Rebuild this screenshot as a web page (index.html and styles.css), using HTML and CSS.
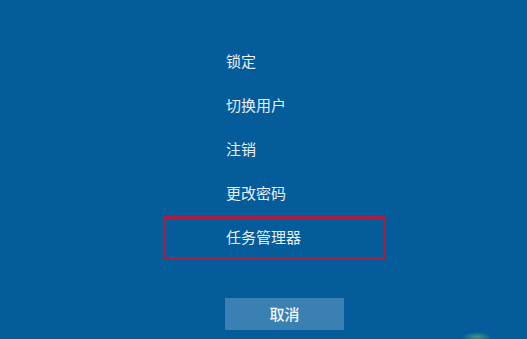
FILE: index.html
```html
<!DOCTYPE html>
<html lang="zh-CN">
<head>
<meta charset="utf-8">
<link rel="stylesheet" href="styles.css">
</head>
<body>
<div class="screen">
  <ul class="menu">
    <li class="item">锁定</li>
    <li class="item">切换用户</li>
    <li class="item">注销</li>
    <li class="item">更改密码</li>
    <li class="item item-marked">任务管理器</li>
  </ul>
  <div class="cancel">取消</div>
  <div class="smudge"></div>
</div>
</body>
</html>
```
FILE: styles.css
```css
html, body {
  margin: 0;
  padding: 0;
  background: #045c9b;
}
.screen {
  position: relative;
  width: 527px;
  height: 339px;
  overflow: hidden;
  background: #045c9b;
  font-family: "Noto Sans CJK SC", "Microsoft YaHei", sans-serif;
  color: #e6eff8;
}
.menu {
  list-style: none;
  margin: 0;
  padding: 40px 0 0 0;
}
.item {
  box-sizing: border-box;
  margin-left: 163px;
  width: 223px;
  height: 44px;
  line-height: 35px;
  padding-left: 60px;
  border: 3px solid transparent;
  font-size: 15px;
}
.item-marked {
  border-color: #a61e40;
}
.cancel {
  margin: 38px 0 0 225px;
  width: 119px;
  height: 32px;
  line-height: 31px;
  text-align: center;
  background: #3a80b2;
  font-size: 15px;
  font-weight: 500;
  color: #f4f8fc;
}
.smudge {
  position: absolute;
  left: 462px;
  top: 332px;
  width: 30px;
  height: 10px;
  background: radial-gradient(ellipse at center, rgba(120,190,110,0.55), rgba(120,190,110,0) 70%);
}
```
